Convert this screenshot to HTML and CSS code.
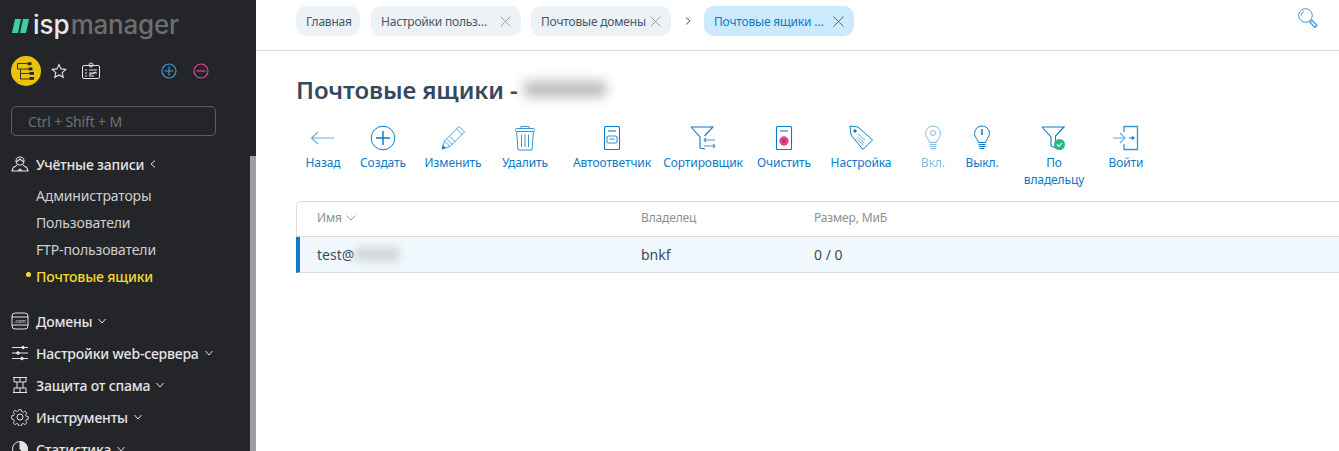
FILE: index.html
```html
<!DOCTYPE html>
<html lang="ru">
<head>
    <meta charset="UTF-8">
    <title>ispmanager</title>
    <link rel="stylesheet" href="styles.css">
</head>
<body>
    <aside class="sidebar">
        <div class="logo">
            <svg class="logo-mark" width="17" height="14" viewBox="0 0 17 14"><path d="M3 0h6L6 14H0zM11 0h6l-3 14H8z" fill="#3fcfa5"/></svg>
            <span class="logo-isp">isp</span><span class="logo-manager">manager</span>
        </div>
        <div class="quick">
            <span class="quick-main">
                <svg width="18" height="18" viewBox="0 0 18 18" fill="none" stroke="#232529" stroke-width=".9"><path d="M.5 1.500h10M.5 1.500v5.500h11M3.500 7v10h9M3.500 11.500h9"/><g fill="#232529" stroke="none"><rect x="10.500" y=".3" width="4" height="2.800"/><rect x="11.500" y="5.500" width="4" height="2.800"/><rect x="12.500" y="10" width="4.500" height="2.800"/><rect x="12.500" y="15" width="4.500" height="2.800"/></g></svg>
            </span>
            <svg class="quick-star" width="16" height="16" viewBox="0 0 16 16" fill="none" stroke="#e4e4e4" stroke-width="1.100"><path d="M8 1.500l2 4.400 4.700.5-3.500 3.200 1 4.700L8 11.900l-4.200 2.400 1-4.700L1.300 6.400 6 5.900z"/></svg>
            <svg class="quick-card" width="18" height="18" viewBox="0 0 18 18" fill="none" stroke="#e4e4e4" stroke-width="1"><rect x=".5" y="3.500" width="17" height="13" rx="1.500"/><circle cx="9" cy="3" r="2"/><path d="M3 8h2M3 11h2M3 14h2M7 8h8M7 11h8M7 14h5M7 13l7-3"/></svg>
            <svg class="quick-plus" width="16" height="16" viewBox="0 0 16 16" fill="none" stroke="#3a9bdc" stroke-width="1.200"><circle cx="8" cy="8" r="7"/><path d="M8 3.500v9M3.500 8h9"/></svg>
            <svg class="quick-minus" width="16" height="16" viewBox="0 0 16 16" fill="none" stroke="#e8439b" stroke-width="1.200"><circle cx="8" cy="8" r="7"/><path d="M3.500 8h9"/></svg>
        </div>
        <div class="menu-search">Ctrl + Shift + M</div>
        <nav class="menu">
            <div class="menu-group">
                <svg class="menu-icon" width="18" height="18" viewBox="0 0 18 18" fill="none" stroke="#e4e4e4" stroke-width="1.100"><circle cx="9" cy="6" r="4"/><path d="M5 7c2-1 3-2 4-3 1 1 2 2 4 3M6 10c-1 1.500-3 1.500-4 3l-1 3h16l-1-3c-1-1.500-3-1.500-4-3M7 16l2-2 2 2"/></svg>
                <span>Учётные записи</span>
                <svg class="menu-arrow" width="6" height="8" viewBox="0 0 6 8" fill="none" stroke="#e4e4e4"><path d="M5 .5L1 4l4 3.500"/></svg>
            </div>
            <ul class="submenu">
                <li>Администраторы</li>
                <li>Пользователи</li>
                <li>FTP-пользователи</li>
                <li class="active">Почтовые ящики</li>
            </ul>
            <div class="menu-group">
                <svg class="menu-icon" width="18" height="18" viewBox="0 0 18 18" fill="none" stroke="#e4e4e4" stroke-width="1"><rect x="1" y="1" width="16" height="16" rx="3"/><path d="M1 5h16M1 13h16"/><text class="icon-com" x="9" y="10.800">.com</text></svg>
                <span>Домены</span>
                <svg class="menu-arrow" width="8" height="6" viewBox="0 0 8 6" fill="none" stroke="#e4e4e4"><path d="M.5 1L4 5l3.500-4"/></svg>
            </div>
            <div class="menu-group">
                <svg class="menu-icon" width="18" height="18" viewBox="0 0 18 18" fill="none" stroke="#e4e4e4" stroke-width="1"><path d="M1 3.500h16M1 9h16M1 14.500h16"/><circle cx="12" cy="3.500" r="1.300" fill="#e4e4e4"/><circle cx="7" cy="9" r="1.300" fill="#e4e4e4"/><circle cx="11" cy="14.500" r="1.300" fill="#e4e4e4"/></svg>
                <span>Настройки web-сервера</span>
                <svg class="menu-arrow" width="8" height="6" viewBox="0 0 8 6" fill="none" stroke="#e4e4e4"><path d="M.5 1L4 5l3.500-4"/></svg>
            </div>
            <div class="menu-group">
                <svg class="menu-icon" width="18" height="18" viewBox="0 0 18 18" fill="none" stroke="#e4e4e4" stroke-width="1"><path d="M2 1.500h14M2 16.500h14M3 6h12M3 12h12M3 1.500V6M15 1.500V6M3 12v4.500M15 12v4.500M9 1.500V6M6 6v6M12 6v6M9 12v4.500"/></svg>
                <span>Защита от спама</span>
                <svg class="menu-arrow" width="8" height="6" viewBox="0 0 8 6" fill="none" stroke="#e4e4e4"><path d="M.5 1L4 5l3.500-4"/></svg>
            </div>
            <div class="menu-group">
                <svg class="menu-icon" width="18" height="18" viewBox="0 0 18 18" fill="none" stroke="#e4e4e4" stroke-width="1"><circle cx="9" cy="9" r="3"/><path d="M7.600 1h2.800l.5 2.300 1.700.7 2-1.300 2 2-1.300 2 .7 1.700 2.300.4v2.800l-2.300.5-.7 1.700 1.300 2-2 2-2-1.300-1.700.7-.5 2.300H7.600l-.5-2.300-1.700-.7-2 1.300-2-2 1.300-2-.7-1.700-2.300-.5V7.800l2.300-.4.700-1.700-1.300-2 2-2 2 1.300 1.700-.7z" transform="translate(1 .8) scale(.89)"/></svg>
                <span>Инструменты</span>
                <svg class="menu-arrow" width="8" height="6" viewBox="0 0 8 6" fill="none" stroke="#e4e4e4"><path d="M.5 1L4 5l3.500-4"/></svg>
            </div>
            <div class="menu-group">
                <svg class="menu-icon" width="18" height="18" viewBox="0 0 18 18" fill="none" stroke="#e4e4e4" stroke-width="1"><circle cx="9" cy="9" r="7.500"/><path d="M9 1.500V9l5 5.500A7.500 7.500 0 0 0 9 1.500z" fill="#e4e4e4"/></svg>
                <span>Статистика</span>
                <svg class="menu-arrow" width="8" height="6" viewBox="0 0 8 6" fill="none" stroke="#e4e4e4"><path d="M.5 1L4 5l3.500-4"/></svg>
            </div>
        </nav>
        <div class="sidebar-scroll"></div>
    </aside>

    <main class="main">
        <header class="tabs">
            <div class="tab tab-home">Главная</div>
            <div class="tab tab-second">
                <span>Настройки польз…</span>
                <svg width="11" height="11" viewBox="0 0 11 11" stroke="#8b97a3" stroke-width=".9"><path d="M.5.500l10 10M10.500.500l-10 10"/></svg>
            </div>
            <div class="tab tab-third">
                <span>Почтовые домены</span>
                <svg width="11" height="11" viewBox="0 0 11 11" stroke="#8b97a3" stroke-width=".9"><path d="M.5.500l10 10M10.500.500l-10 10"/></svg>
            </div>
            <svg class="tab-sep" width="6" height="8" viewBox="0 0 6 8" fill="none" stroke="#555"><path d="M1 .5L5 4 1 7.500"/></svg>
            <div class="tab tab-current">
                <span>Почтовые ящики …</span>
                <svg width="11" height="11" viewBox="0 0 11 11" stroke="#0a7bc4" stroke-width="1"><path d="M.5.500l10 10M10.500.500l-10 10"/></svg>
            </div>
            <svg class="tabs-search" width="20" height="20" viewBox="0 0 20 20" fill="none" stroke="#3a9bdc"><circle cx="7.500" cy="7.500" r="6.800"/><path d="M3 7.500a4.500 4.500 0 0 1 3-4"/><path d="M12.500 13l1.500-.8 5 5.300-2 2-5-5.200z" stroke-width="1.300"/></svg>
        </header>

        <h1 class="page-title">Почтовые ящики - <span class="blur-title"></span></h1>

        <div class="toolbar">
            <div class="tool">
                <svg width="26" height="26" viewBox="0 0 26 26" fill="none" stroke="#62aee0" stroke-width="1.100"><path d="M24 13H1.500M8 7l-6.500 6L8 19"/></svg>
                <span>Назад</span>
            </div>
            <div class="tool">
                <svg width="26" height="26" viewBox="0 0 26 26" fill="none" stroke="#0a7bc4"><circle cx="13" cy="13" r="11.800"/><path d="M13 6v14M6 13h14" stroke-width="1.500"/></svg>
                <span>Создать</span>
            </div>
            <div class="tool">
                <svg width="26" height="26" viewBox="0 0 26 26" fill="none" stroke="#3a93d2" stroke-width=".9"><path d="M2 24l2.500-8L19 1.500l5.500 5.500L10 21.500z"/><path d="M4.500 16l5.500 5.500M16.500 4l5.500 5.500M7 14.500l5 5M10 11.500l5 5"/><path d="M2 24l1-3.500 2.500 2.500z" fill="#0a7bc4"/></svg>
                <span>Изменить</span>
            </div>
            <div class="tool">
                <svg width="26" height="26" viewBox="0 0 26 26" fill="none" stroke="#3a93d2"><path d="M4.500 6l1.500 19h14L21.500 6"/><rect x="3.500" y="3.500" width="19" height="3" rx="1"/><path d="M9 3.500V1.500h8v2M9.500 9.500v12.500M13 9.500v12.500M16.500 9.500v12.500"/></svg>
                <span>Удалить</span>
            </div>
            <div class="tool">
                <svg width="26" height="26" viewBox="0 0 26 26" fill="none" stroke="#0a7bc4" stroke-width="1.100"><rect x="5.500" y="1.500" width="15" height="23" rx="1"/><path d="M9 6h8"/><rect x="8" y="11" width="10" height="7" rx="1.500" stroke="#3a93d2"/><path d="M10.500 14h5" stroke="#3a93d2"/></svg>
                <span>Автоответчик</span>
            </div>
            <div class="tool">
                <svg width="26" height="26" viewBox="0 0 26 26" fill="none" stroke="#0a7bc4" stroke-width="1.100"><path d="M1 2h22l-8.500 9M1 2l9 10v11l5 1"/><path d="M14 15h11M16 13l-2 2 2 2M14 21h11M23 19l2 2-2 2" stroke="#4a9ad4"/></svg>
                <span>Сортировщик</span>
            </div>
            <div class="tool">
                <svg width="26" height="26" viewBox="0 0 26 26" fill="none" stroke="#0a7bc4" stroke-width="1.100"><rect x="5.500" y="1.500" width="15" height="23" rx="1"/><path d="M9 6h8"/><circle cx="13" cy="16" r="4.700" fill="#e8439b" stroke="none"/><path d="M11.300 14.300l3.400 3.400M14.700 14.300l-3.400 3.400" stroke="#b02a72"/></svg>
                <span>Очистить</span>
            </div>
            <div class="tool">
                <svg width="26" height="26" viewBox="0 0 26 26" fill="none" stroke="#0a7bc4"><path d="M2 1l8 1 14.500 13L15 24.500 3 10z"/><circle cx="7" cy="6" r="1.200" fill="#0a7bc4"/><path d="M10 9l7 6M9.500 12l7 6M8.500 14l7 6" stroke="#62aee0"/></svg>
                <span>Настройка</span>
            </div>
            <div class="tool tool-disabled">
                <svg width="26" height="26" viewBox="0 0 26 26" fill="none" stroke="#0a7bc4"><path d="M9.500 17.500C9 14 5.500 12.500 5.500 8.500a7.500 7.500 0 0 1 15 0c0 4-3.500 5.500-4 9z"/><circle cx="13" cy="8" r="2.500"/><path d="M9.500 19.500h7M9.500 21.500h7M10.500 23.500h5"/></svg>
                <span>Вкл.</span>
            </div>
            <div class="tool">
                <svg width="26" height="26" viewBox="0 0 26 26" fill="none" stroke="#0a7bc4"><path d="M9.500 17.500C9 14 5.500 12.500 5.500 8.500a7.500 7.500 0 0 1 15 0c0 4-3.500 5.500-4 9z"/><path d="M13 4v6" stroke-width="1.500"/><path d="M9.500 19.500h7M9.500 21.500h7M10.500 23.500h5"/></svg>
                <span>Выкл.</span>
            </div>
            <div class="tool">
                <svg width="26" height="26" viewBox="0 0 26 26" fill="none" stroke="#0a7bc4" stroke-width="1.100"><path d="M1 2h22l-8.500 9v10M1 2l9 10v9l5 2"/><circle cx="18.500" cy="19.500" r="5.500" fill="#2db57e" stroke="none"/><path d="M16 19.500l2 2 3-3.500" stroke="#fff"/></svg>
                <span>По<br>владельцу</span>
            </div>
            <div class="tool">
                <svg width="26" height="26" viewBox="0 0 26 26" fill="none" stroke="#62aee0" stroke-width="1.100"><path d="M11 7V1.500h13.500v23H11V19" stroke="#3a93d2" stroke-width="1.300"/><path d="M0 13h12M7 8l5 5-5 5"/><path d="M16 13h5M19 11.500l2 1.500-2 1.500" stroke="#0a7bc4"/></svg>
                <span>Войти</span>
            </div>
        </div>

        <div class="table">
            <div class="table-row table-head">
                <div class="cell">Имя <svg width="10" height="6" viewBox="0 0 10 6" fill="none" stroke="#9a9a9a"><path d="M.5.500L5 5 9.500.500"/></svg></div>
                <div class="cell">Владелец</div>
                <div class="cell">Размер, МиБ</div>
            </div>
            <div class="table-row table-selected">
                <div class="cell">test@<span class="blur-cell"></span></div>
                <div class="cell">bnkf</div>
                <div class="cell">0 / 0</div>
            </div>
        </div>
    </main>
</body>
</html>
```

FILE: styles.css
```css
* {
    margin: 0;
    padding: 0;
    box-sizing: border-box;
}
html, body {
    height: 451px;
    overflow: hidden;
}
body {
    display: flex;
    font-family: 'Noto Sans', 'Open Sans', sans-serif;
    font-size: 13px;
    background: #fff;
    color: #3c4a5a;
}

/* Sidebar */
.sidebar {
    position: relative;
    flex: 0 0 256px;
    height: 451px;
    overflow: hidden;
    background: #232529;
    color: #e4e4e4;
    padding: 0 0 0 11px;
}
.sidebar-scroll {
    position: absolute;
    top: 156px;
    bottom: 0;
    right: 0;
    width: 6px;
    background: #9f9f9f;
}
.logo {
    display: flex;
    align-items: baseline;
    height: 42px;
    padding: 8px 0 0 1px;
    font-family: 'Inter', sans-serif;
    font-size: 26px;
    font-weight: 500;
    line-height: 34px;
}
.logo-mark {
    flex: none;
    align-self: center;
    margin-right: 4px;
    margin-top: 2px;
}
.logo-isp {
    color: #e8e8e8;
}
.logo-manager {
    margin-left: 1px;
    letter-spacing: -.2px;
    color: #6c6e71;
}
.quick {
    display: flex;
    align-items: center;
    height: 30px;
    margin-top: 14px;
}
.quick-main {
    display: flex;
    align-items: center;
    justify-content: center;
    width: 30px;
    height: 30px;
    border-radius: 50%;
    background: #e9c40c;
}
.quick-star {
    margin-left: 10px;
}
.quick-card {
    margin-left: 15px;
}
.quick-plus {
    margin-left: 61px;
}
.quick-minus {
    margin-left: 16px;
}
.menu-search {
    width: 205px;
    height: 30px;
    margin-top: 20px;
    padding-left: 16px;
    border: 1px solid #5c5e62;
    border-radius: 5px;
    font-size: 14px;
    letter-spacing: -.15px;
    line-height: 30px;
    color: #6f7175;
}
.menu {
    margin-top: 12px;
}
.menu-group {
    display: flex;
    align-items: center;
    height: 32px;
    font-size: 14px;
    font-weight: 500;
    letter-spacing: -.2px;
    color: #e4e4e4;
}
.menu-icon {
    flex: none;
    margin-right: 7px;
}
.menu-arrow {
    margin-left: 6px;
}
.icon-com {
    font-size: 5px;
    font-weight: 400;
    letter-spacing: 0;
    text-anchor: middle;
    fill: #e4e4e4;
    stroke: none;
}
.submenu {
    list-style: none;
    margin: 2px 0 15px;
    padding-left: 25px;
}
.submenu li {
    position: relative;
    height: 27px;
    font-size: 14px;
    letter-spacing: -.15px;
    line-height: 27px;
    color: #cfcfcf;
}
.submenu .active {
    color: #f7d92a;
    font-weight: 500;
}
.submenu .active::before {
    content: '';
    position: absolute;
    left: -10px;
    top: 9px;
    width: 5px;
    height: 5px;
    border-radius: 50%;
    background: #f7d92a;
}

/* Tabs */
.main {
    flex: 1;
    min-width: 0;
}
.tabs {
    display: flex;
    align-items: center;
    height: 51px;
    padding: 0 21px 8px 40px;
    border-bottom: 1px solid #dcdcdc;
}
.tab {
    display: flex;
    align-items: center;
    justify-content: space-between;
    height: 30px;
    padding: 0 10px;
    margin-right: 10px;
    border-radius: 10px;
    background: #edf2f6;
    font-size: 12px;
    letter-spacing: -.2px;
    white-space: nowrap;
    color: #4a5662;
}
.tab-home {
    width: 64px;
    margin-right: 11px;
}
.tab-second {
    width: 150px;
}
.tab-third {
    width: 140px;
}
.tab-current {
    width: 150px;
    margin-right: 0;
    background: #cceafd;
    color: #0a7bc4;
}
.tab-sep {
    margin: 0 13px 0 4px;
}
.tabs-search {
    margin-left: auto;
    margin-bottom: 6px;
}

/* Content */
.page-title {
    display: flex;
    align-items: center;
    height: 38px;
    margin: 19px 0 0 40px;
    font-size: 24px;
    font-weight: 600;
    letter-spacing: -.1px;
    white-space: pre;
    color: #34495e;
}
.blur-title {
    display: block;
    width: 82px;
    height: 16px;
    background: #bcbcbc;
    filter: blur(6px);
}
.toolbar {
    display: grid;
    grid-template-columns: 36px 84px 56px 88px 86px 96px 66px 88px 56px 42px 102px 42px;
    margin: 17px 0 0 49px;
}
.tool {
    display: flex;
    flex-direction: column;
    align-items: center;
    font-size: 12px;
    letter-spacing: -.1px;
    line-height: 17px;
    text-align: center;
    white-space: nowrap;
    color: #0a7bc4;
}
.tool span {
    margin-top: 3px;
}
.tool-disabled {
    opacity: .5;
}
.table {
    margin: 13px 0 0 40px;
    border-top: 1px solid #dcdcdc;
    border-left: 1px solid #dcdcdc;
    border-top-left-radius: 5px;
}
.table-row {
    display: grid;
    grid-template-columns: 324px 173px 1fr;
    align-items: center;
    padding-left: 20px;
}
.table-head {
    height: 35px;
    padding-bottom: 3px;
    font-size: 12px;
    letter-spacing: -.15px;
    color: #8f8f8f;
    border-bottom: 1px solid #dcdcdc;
}
.table-selected {
    height: 36px;
    margin-left: -1px;
    padding-left: 17px;
    font-size: 14px;
    color: #3c4a5a;
    background: #f0f8fd;
    border-left: 4px solid #0a7bc4;
    border-bottom: 1px solid #dcdcdc;
}
.cell {
    display: flex;
    align-items: center;
    gap: 4px;
}
.table-selected .cell {
    gap: 0;
}
.blur-cell {
    display: block;
    width: 44px;
    height: 13px;
    margin-left: 1px;
    background: #cfd4d8;
    filter: blur(4px);
}
```
